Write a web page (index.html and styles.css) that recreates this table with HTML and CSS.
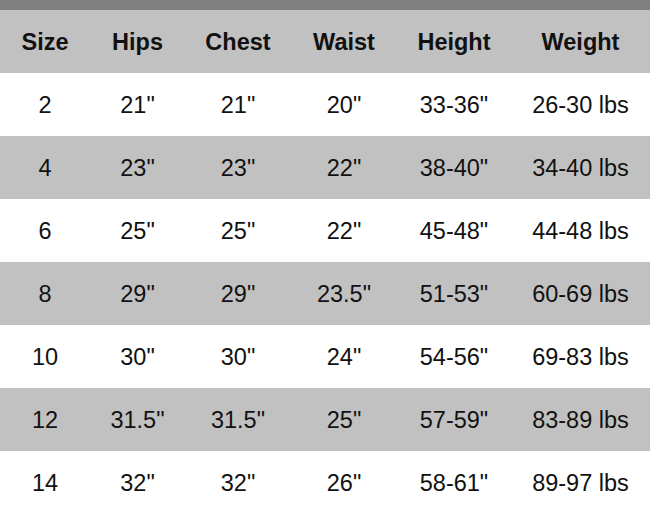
FILE: index.html
```html
<!DOCTYPE html>
<html>
<head>
<meta charset="utf-8">
<link rel="stylesheet" href="styles.css">
</head>
<body>
<div class="topbar"></div>
<table class="chart">
  <colgroup>
    <col class="c1"><col class="c2"><col class="c3"><col class="c4"><col class="c5"><col class="c6">
  </colgroup>
  <thead>
    <tr><th>Size</th><th>Hips</th><th>Chest</th><th>Waist</th><th>Height</th><th>Weight</th></tr>
  </thead>
  <tbody>
    <tr><td>2</td><td>21"</td><td>21"</td><td>20"</td><td>33-36"</td><td>26-30 lbs</td></tr>
    <tr><td>4</td><td>23"</td><td>23"</td><td>22"</td><td>38-40"</td><td>34-40 lbs</td></tr>
    <tr><td>6</td><td>25"</td><td>25"</td><td>22"</td><td>45-48"</td><td>44-48 lbs</td></tr>
    <tr><td>8</td><td>29"</td><td>29"</td><td>23.5"</td><td>51-53"</td><td>60-69 lbs</td></tr>
    <tr><td>10</td><td>30"</td><td>30"</td><td>24"</td><td>54-56"</td><td>69-83 lbs</td></tr>
    <tr><td>12</td><td>31.5"</td><td>31.5"</td><td>25"</td><td>57-59"</td><td>83-89 lbs</td></tr>
    <tr><td>14</td><td>32"</td><td>32"</td><td>26"</td><td>58-61"</td><td>89-97 lbs</td></tr>
  </tbody>
</table>
</body>
</html>
```
FILE: styles.css
```css
html, body {
  margin: 0;
  padding: 0;
  background: #ffffff;
}
body {
  width: 650px;
  font-family: "Liberation Sans", Arial, sans-serif;
  color: #111111;
}
.topbar {
  height: 10px;
  background: #808080;
}
.chart {
  width: 650px;
  border-collapse: collapse;
  table-layout: fixed;
}
.c1 { width: 90px; }
.c2 { width: 95px; }
.c3 { width: 106px; }
.c4 { width: 106px; }
.c5 { width: 114px; }
.c6 { width: 139px; }
.chart tr {
  height: 63px;
}
.chart th, .chart td {
  padding: 3px 0 0 0;
  text-align: center;
  vertical-align: middle;
  font-size: 23.5px;
  line-height: 1;
}
.chart th {
  font-weight: bold;
  background: #c1c1c1;
}
.chart td {
  font-weight: normal;
}
.chart tbody tr:nth-child(even) td {
  background: #c1c1c1;
}
```
